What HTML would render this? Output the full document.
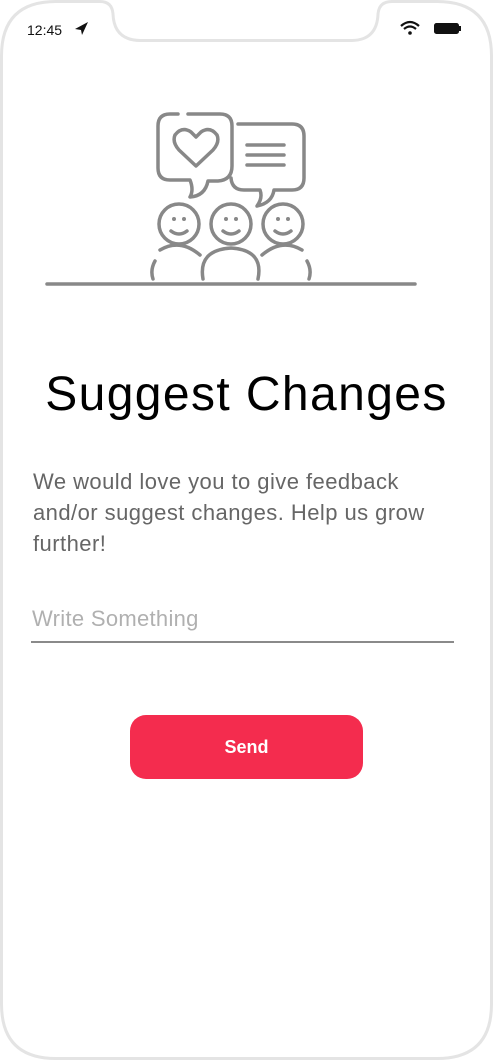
<!DOCTYPE html>
<html><head><meta charset="utf-8"><style>
html,body{margin:0;padding:0;background:#fff;}
body{width:493px;height:1060px;position:relative;overflow:hidden;font-family:"Liberation Sans",sans-serif;}
.abs{position:absolute;}
.title{left:0;width:493px;top:366px;text-align:center;font-size:48px;letter-spacing:1.4px;color:#000;line-height:58px;}
.body{left:33px;top:466px;width:412px;font-size:22px;letter-spacing:0.45px;line-height:31px;color:#666;}
.ph{left:32px;top:606px;font-size:22px;letter-spacing:0.3px;color:#b0b0b0;}
.line{left:31px;top:641px;width:423px;height:2px;background:#8a8a8a;}
.btn{left:130px;top:715px;width:233px;height:64px;border-radius:16px;background:#f42c4e;color:#fff;font-weight:bold;font-size:18px;text-align:center;line-height:64px;}
</style></head><body>
<svg class="abs" style="left:0;top:0" width="493" height="1060" viewBox="0 0 493 1060">
  <path d="M56 1.5 H100 Q112 1.5 113 14 Q114 40 140 40.5 H352 Q377 40 378 14 Q379 1.5 392 1.5 H437 Q491.5 1.5 491.5 56 V1004 Q491.5 1058.5 437 1058.5 H56 Q1.5 1058.5 1.5 1004 V56 Q1.5 1.5 56 1.5 Z" fill="none" stroke="#e4e4e4" stroke-width="3"/>
  <text x="27" y="35" font-family="Liberation Sans" font-size="14" fill="#111">12:45</text>
  <path d="M75 29 L88 22 L82 35 L81 30 Z" fill="#111"/>
  <path d="M401 26 Q410 18 419 26" fill="none" stroke="#111" stroke-width="2.2"/>
  <path d="M404 29 Q410 24 416 29" fill="none" stroke="#111" stroke-width="2.2"/>
  <circle cx="410" cy="33" r="1.8" fill="#111"/>
  <rect x="434.5" y="23.5" width="24" height="10" rx="2" fill="#111" stroke="#111"/>
  <rect x="459" y="26" width="2" height="5" fill="#111"/>
  <g fill="none" stroke="#888" stroke-width="3.5" stroke-linecap="round" stroke-linejoin="round">
    <path d="M178 114 H170 Q158 114 158 126 V168 Q158 180 170 180 H190 Q194 190 190 197 Q205 196 208 181 H218 Q232 180 232 166 V126 Q232 114 220 114 H188"/>
    <path d="M196 166 L179 150 Q172 142 175 135 Q182 126 191 132 L196 137 L201 132 Q210 126 217 135 Q220 142 213 150 Z"/>
    <path d="M238 124 H292 Q304 124 304 136 V178 Q304 190 292 190 H274 Q272 203 257 206 Q263 198 260 190 H244 Q232 190 231 178"/>
    <path d="M247 145 H284 M247 155 H284 M247 165 H284"/>
    <circle cx="179" cy="224" r="20"/>
    <circle cx="231" cy="224" r="20"/>
    <circle cx="283" cy="224" r="20"/>
    <path d="M171 231 Q179 237 187 231 M223 231 Q231 237 239 231 M275 231 Q283 237 291 231"/>
    <path d="M160 250 Q180 238 200 255 M262 255 Q282 238 302 250"/>
    <path d="M155 261 Q150 270 153 279 M307 261 Q312 270 309 279"/>
    <path d="M203 279 Q198 250 231 248 Q264 250 258 279"/>
    <path d="M47 284 H415"/>
  </g>
  <g fill="#888"><circle cx="174" cy="219" r="2"/><circle cx="184" cy="219" r="2"/><circle cx="226" cy="219" r="2"/><circle cx="236" cy="219" r="2"/><circle cx="278" cy="219" r="2"/><circle cx="288" cy="219" r="2"/></g>
</svg>
<div class="abs title">Suggest Changes</div>
<div class="abs body">We would love you to give feedback and/or suggest changes. Help us grow further!</div>
<div class="abs ph">Write Something</div>
<div class="abs line"></div>
<div class="abs btn">Send</div>
</body></html>
